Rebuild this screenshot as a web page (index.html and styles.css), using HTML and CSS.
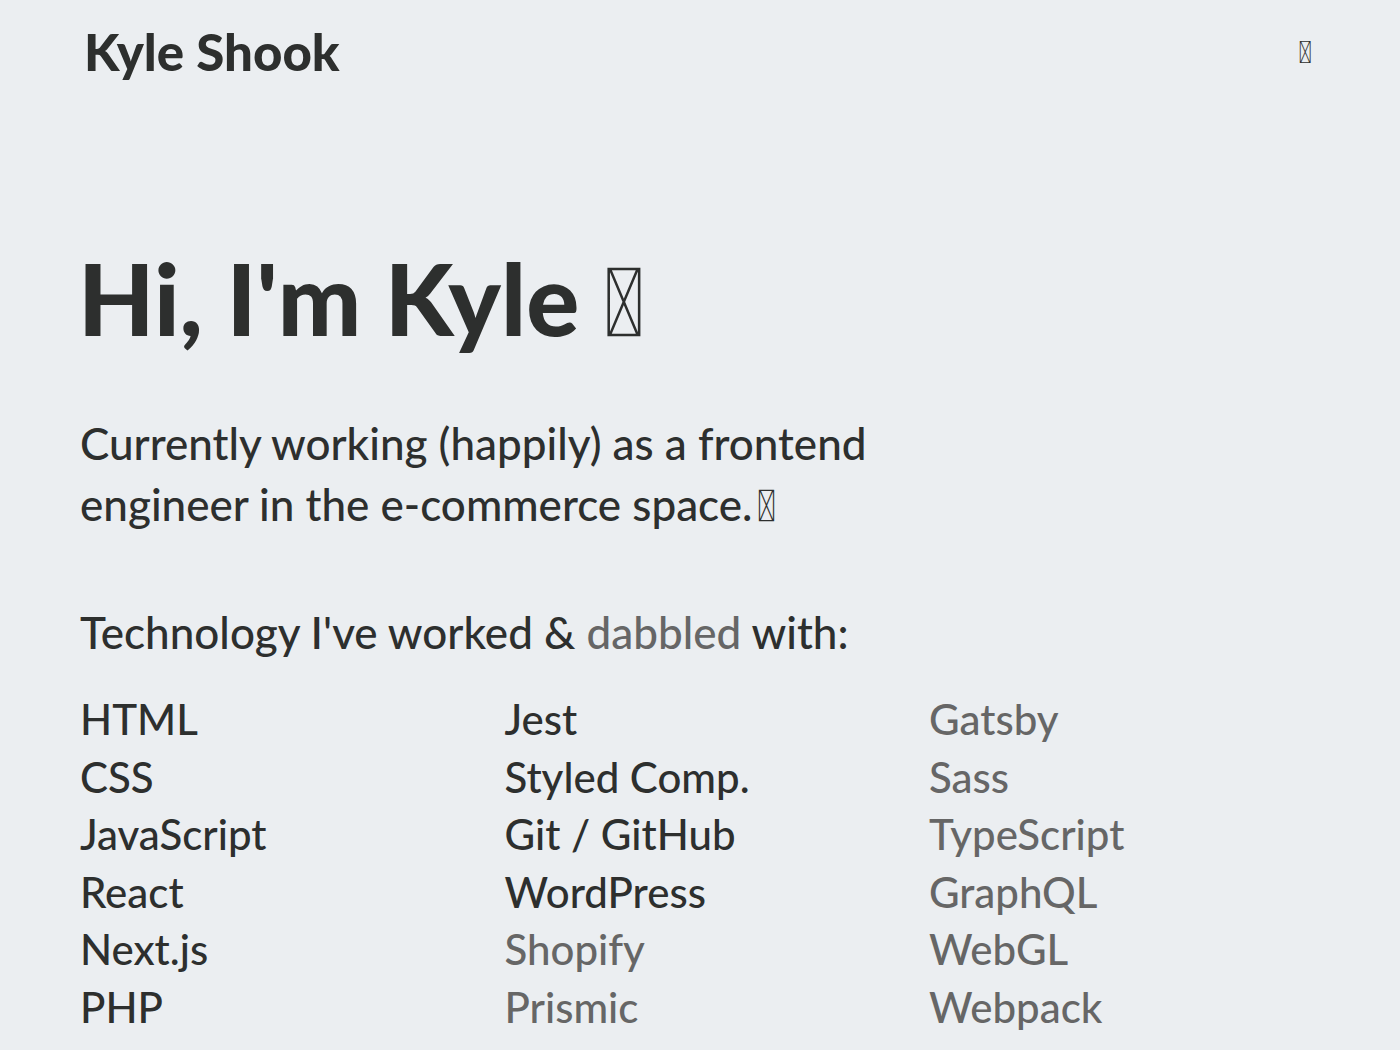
FILE: index.html
```html
<!DOCTYPE html>
<html lang="en">
<head>
<meta charset="utf-8">
<title>Kyle Shook</title>
<link rel="stylesheet" href="styles.css">
</head>
<body>
<header class="site-header">
  <a class="logo" href="#">Kyle Shook</a>
  <button class="theme-toggle" type="button"><span class="emoji">&#xE000;</span></button>
</header>
<main class="content">
  <h1 class="hero-title">Hi, I'm Kyle <span class="emoji">&#xE001;</span></h1>
  <p class="intro">Currently working (happily) as a frontend engineer in the e-commerce space.<span class="emoji emoji-inline">&#xE002;</span></p>
  <h2 class="tech-title">Technology I've worked &amp; <span class="muted">dabbled</span> with:</h2>
  <ul class="tech-list">
    <li>HTML</li>
    <li>CSS</li>
    <li>JavaScript</li>
    <li>React</li>
    <li>Next.js</li>
    <li>PHP</li>
    <li>Jest</li>
    <li>Styled Comp.</li>
    <li>Git / GitHub</li>
    <li>WordPress</li>
    <li class="muted">Shopify</li>
    <li class="muted">Prismic</li>
    <li class="muted">Gatsby</li>
    <li class="muted">Sass</li>
    <li class="muted">TypeScript</li>
    <li class="muted">GraphQL</li>
    <li class="muted">WebGL</li>
    <li class="muted">Webpack</li>
  </ul>
</main>
</body>
</html>
```
FILE: styles.css
```css
* { box-sizing: border-box; }
html, body { margin: 0; padding: 0; }
body {
  background: #ebeef1;
  color: #2d2f2e;
  font-family: "Lato", "DejaVu Sans", sans-serif;
}
.emoji {
  font-family: "Roboto", sans-serif;
  font-weight: 400;
  line-height: 1;
}
.emoji-inline { margin-left: 4px; }
.site-header {
  display: flex;
  justify-content: space-between;
  align-items: center;
  padding: 22px 88px 0 84px;
  height: 82px;
}
.logo {
  color: #2d2f2e;
  text-decoration: none;
  font-weight: 900;
  font-size: 51px;
  line-height: 60px;
}
.theme-toggle {
  background: none;
  border: 0;
  padding: 0;
  font-size: 31px;
  line-height: 1;
  color: #2d2f2e;
}
.content {
  padding: 0 80px;
}
.hero-title {
  margin: 161px 0 0 -2px;
  font-size: 99px;
  font-weight: 900;
  line-height: 110px;
}
.hero-title .emoji { font-size: 96px; }
.intro {
  margin: 60px 0 0;
  font-size: 44px;
  line-height: 61px;
  max-width: 820px;
  font-weight: 500;
}
.tech-title {
  margin: 67px 0 0;
  font-size: 44px;
  font-weight: 500;
  line-height: 61px;
}
.muted { color: #666666; }
.tech-list {
  list-style: none;
  margin: 28px 0 0;
  padding: 0;
  display: grid;
  grid-template-columns: repeat(3, 424.5px);
  grid-template-rows: repeat(6, 57.5px);
  grid-auto-flow: column;
  font-size: 42px;
  font-weight: 500;
  line-height: 57.5px;
}
```
